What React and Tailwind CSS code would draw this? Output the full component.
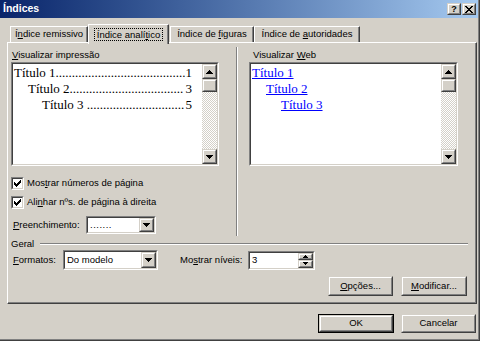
import * as React from "react";

function Raised({ className = "", children }) {
  return (
    <div className={`border border-t-[#d4d0c8] border-l-[#d4d0c8] border-r-[#404040] border-b-[#404040] ${className}`}>
      <div className="h-full w-full border border-t-white border-l-white border-r-[#808080] border-b-[#808080] bg-[#d4d0c8] flex items-center justify-center">
        {children}
      </div>
    </div>
  );
}

function Sunken({ className = "", children }) {
  return (
    <div className={`border border-t-[#808080] border-l-[#808080] border-r-white border-b-white ${className}`}>
      <div className="h-full w-full border border-t-[#404040] border-l-[#404040] border-r-[#d4d0c8] border-b-[#d4d0c8] bg-white flex">
        {children}
      </div>
    </div>
  );
}

function Down() {
  return (
    <svg width="7" height="4" viewBox="0 0 7 4" shapeRendering="crispEdges">
      <rect x="0" y="0" width="7" height="1" />
      <rect x="1" y="1" width="5" height="1" />
      <rect x="2" y="2" width="3" height="1" />
      <rect x="3" y="3" width="1" height="1" />
    </svg>
  );
}

function Up() {
  return (
    <svg width="7" height="4" viewBox="0 0 7 4" shapeRendering="crispEdges">
      <rect x="3" y="0" width="1" height="1" />
      <rect x="2" y="1" width="3" height="1" />
      <rect x="1" y="2" width="5" height="1" />
      <rect x="0" y="3" width="7" height="1" />
    </svg>
  );
}

function SmallUp() {
  return (
    <svg width="5" height="3" viewBox="0 0 5 3" shapeRendering="crispEdges">
      <rect x="2" y="0" width="1" height="1" />
      <rect x="1" y="1" width="3" height="1" />
      <rect x="0" y="2" width="5" height="1" />
    </svg>
  );
}

function SmallDown() {
  return (
    <svg width="5" height="3" viewBox="0 0 5 3" shapeRendering="crispEdges">
      <rect x="0" y="0" width="5" height="1" />
      <rect x="1" y="1" width="3" height="1" />
      <rect x="2" y="2" width="1" height="1" />
    </svg>
  );
}

function Scrollbar() {
  return (
    <div className="w-[15px] shrink-0 h-full flex flex-col">
      <Raised className="h-[15px]">
        <Up />
      </Raised>
      <Raised className="h-[13px]" />
      <div className="flex-1 bg-[repeating-conic-gradient(#ffffff_0%_25%,#d4d0c8_0%_50%)] [background-size:2px_2px]" />
      <Raised className="h-[15px]">
        <Down />
      </Raised>
    </div>
  );
}

function Check() {
  return (
    <div className="w-[13px] h-[13px] border border-t-[#808080] border-l-[#808080] border-r-white border-b-white">
      <div className="h-full w-full border border-t-[#404040] border-l-[#404040] border-r-[#d4d0c8] border-b-[#d4d0c8] bg-white flex items-center justify-center">
        <svg width="7" height="7" viewBox="0 0 7 7" shapeRendering="crispEdges">
          <rect x="6" y="0" width="1" height="1" />
          <rect x="5" y="1" width="2" height="1" />
          <rect x="0" y="2" width="1" height="1" />
          <rect x="4" y="2" width="3" height="1" />
          <rect x="0" y="3" width="2" height="1" />
          <rect x="3" y="3" width="3" height="1" />
          <rect x="0" y="4" width="5" height="1" />
          <rect x="1" y="5" width="3" height="1" />
          <rect x="2" y="6" width="1" height="1" />
        </svg>
      </div>
    </div>
  );
}

function U({ children }) {
  return <span className="underline underline-offset-1">{children}</span>;
}

// leader dots counted per row so they reach the page number without clipping
function TocRow({ className = "", label, num, dots }) {
  return (
    <div className={`flex h-[16px] items-center justify-between whitespace-nowrap ${className}`}>
      <span>
        {label}
        {".".repeat(dots)}
      </span>
      <span>{num}</span>
    </div>
  );
}

function Tab({ className, children }) {
  return (
    <div className={`h-[16px] border-l border-t border-r border-l-white border-t-white border-r-[#404040] shadow-[inset_-1px_0_#808080] flex items-center justify-center whitespace-nowrap ${className}`}>
      <span>{children}</span>
    </div>
  );
}

export default function App() {
  return (
    <div className="w-[480px] h-[341px] overflow-hidden bg-[#404040] pr-px pb-px">
      <div className="h-full w-full bg-[#808080] pr-px pb-px">
        <div className="h-full w-full bg-[#d4d0c8] flex flex-col font-['Liberation_Sans',Arial,sans-serif] text-[9.5px] text-black">
          {/* Title bar */}
          <div className="h-[18px] flex items-center bg-linear-to-r from-[#0a246a] to-[#a6caf0] pl-[3px] pr-[2px]">
            <span className="flex-1 text-white font-bold text-[10.5px]">Índices</span>
            <Raised className="w-[14px] h-[12px]">
              <span className="font-bold text-[9px] leading-none">?</span>
            </Raised>
            <Raised className="ml-[1px] w-[14px] h-[12px]">
              <svg width="8" height="7" viewBox="0 0 8 7" shapeRendering="crispEdges">
                <path d="M0 0h2v1h-2zM6 0h2v1h-2zM1 1h2v1h-2zM5 1h2v1h-2zM2 2h4v1h-4zM3 3h2v1h-2zM2 4h4v1h-4zM1 5h2v1h-2zM5 5h2v1h-2zM0 6h2v1h-2zM6 6h2v1h-2z" />
              </svg>
            </Raised>
          </div>

          {/* Tabs */}
          <div className="mt-[6px] h-[18px] flex items-end pl-[10px]">
            <Tab className="w-[78px]">
              Í<U>n</U>dice remissivo
            </Tab>
            <div className="relative z-10 -mb-[2px] h-[20px] w-[81px] bg-[#d4d0c8] border-l border-t border-r border-l-white border-t-white border-r-[#404040] shadow-[inset_-1px_0_#808080] flex items-center justify-center whitespace-nowrap">
              <span className="border border-dotted border-black px-[2px] leading-[11px]">
                Índice analí<U>t</U>ico
              </span>
            </div>
            <Tab className="ml-px w-[84px]">
              Índice de <U>f</U>iguras
            </Tab>
            <Tab className="w-[106px]">
              Índice de <U>a</U>utoridades
            </Tab>
          </div>

          {/* Panel */}
          <div className="ml-[7px] w-[470px] h-[262px] border border-t-white border-l-white border-r-[#404040] border-b-[#404040]">
            <div className="h-full w-full border-r border-b border-r-[#808080] border-b-[#808080] flex flex-col">
              <div className="flex">
                {/* Print preview column */}
                <div className="ml-[3px] w-[208px] pt-[6px] flex flex-col">
                  <div className="h-[12px] leading-[12px] pl-px">
                    <U>V</U>isualizar impressão
                  </div>
                  <Sunken className="mt-px h-[104px]">
                    <div className="flex-1 min-w-0 pt-px pl-px pr-[10px] font-['Liberation_Serif',serif] text-[13px]">
                      <TocRow label="Título 1" num="1" dots={40} />
                      <TocRow className="pl-[14px]" label="Título 2" num="3" dots={35} />
                      <TocRow className="pl-[28px]" label="Título 3 " num="5" dots={30} />
                    </div>
                    <Scrollbar />
                  </Sunken>
                  <div className="mt-[11px] h-[13px] flex items-center">
                    <Check />
                    <span className="ml-[3px]">
                      Mos<U>t</U>rar números de página
                    </span>
                  </div>
                  <div className="mt-[6px] h-[13px] flex items-center">
                    <Check />
                    <span className="ml-[3px]">
                      Ali<U>n</U>har nºs. de página à direita
                    </span>
                  </div>
                  <div className="mt-[7px] h-[18px] flex items-center pl-[2px]">
                    <span className="w-[73px]">
                      <U>P</U>reenchimento:
                    </span>
                    <Sunken className="w-[70px] h-[18px]">
                      <div className="flex-1 flex items-center pl-[2px] tracking-[0.5px]">.......</div>
                      <Raised className="w-[15px] h-full">
                        <Down />
                      </Raised>
                    </Sunken>
                  </div>
                </div>

                {/* Separator */}
                <div className="ml-[17px] mt-[4px] h-[189px] w-[2px] border-l border-r border-l-[#808080] border-r-white" />

                {/* Web preview column */}
                <div className="ml-[11px] w-[209px] pt-[6px] flex flex-col">
                  <div className="h-[12px] leading-[12px] pl-[4px]">
                    Visualizar <U>W</U>eb
                  </div>
                  <Sunken className="mt-px h-[104px]">
                    <div className="flex-1 min-w-0 pt-px pl-px font-['Liberation_Serif',serif] text-[13px] text-[#0000ff]">
                      <div className="h-[16px] flex items-center">
                        <span className="underline">Título 1</span>
                      </div>
                      <div className="h-[16px] flex items-center pl-[14px]">
                        <span className="underline">Título 2</span>
                      </div>
                      <div className="h-[16px] flex items-center pl-[29px]">
                        <span className="underline">Título 3</span>
                      </div>
                    </div>
                    <Scrollbar />
                  </Sunken>
                </div>
              </div>

              {/* Geral */}
              <div className="mt-[2px] h-[12px] flex items-center pl-[3px]">
                <span>Geral</span>
                <div className="ml-[6px] mr-[7px] flex-1 h-[2px] border-t border-b border-t-[#808080] border-b-white" />
              </div>
              <div className="h-[20px] flex items-center pl-[5px]">
                <span className="w-[50px]">
                  <U>F</U>ormatos:
                </span>
                <Sunken className="w-[95px] h-[20px]">
                  <div className="flex-1 flex items-center pl-[2px]">Do modelo</div>
                  <Raised className="w-[15px] h-full">
                    <Down />
                  </Raised>
                </Sunken>
                <span className="ml-[22px] w-[68px]">
                  Mo<U>s</U>trar níveis:
                </span>
                <Sunken className="w-[67px] h-[19px]">
                  <div className="flex-1 flex items-center pl-[2px]">3</div>
                  <div className="w-[15px] h-full flex flex-col">
                    <Raised className="flex-1">
                      <SmallUp />
                    </Raised>
                    <Raised className="flex-1">
                      <SmallDown />
                    </Raised>
                  </div>
                </Sunken>
              </div>
              <div className="mt-[6px] h-[20px] flex justify-end gap-[8px] pr-[8px]">
                <Raised className="w-[65px] h-full">
                  <span>
                    <U>O</U>pções...
                  </span>
                </Raised>
                <Raised className="w-[66px] h-full">
                  <span>
                    <U>M</U>odificar...
                  </span>
                </Raised>
              </div>
            </div>
          </div>

          {/* Dialog buttons */}
          <div className="mt-[10px] h-[19px] flex justify-end gap-[7px] pr-[2px]">
            <div className="w-[76px] h-full border border-black">
              <Raised className="w-full h-full">
                <span>OK</span>
              </Raised>
            </div>
            <Raised className="w-[75px] h-full">
              <span>Cancelar</span>
            </Raised>
          </div>
        </div>
      </div>
    </div>
  );
}
